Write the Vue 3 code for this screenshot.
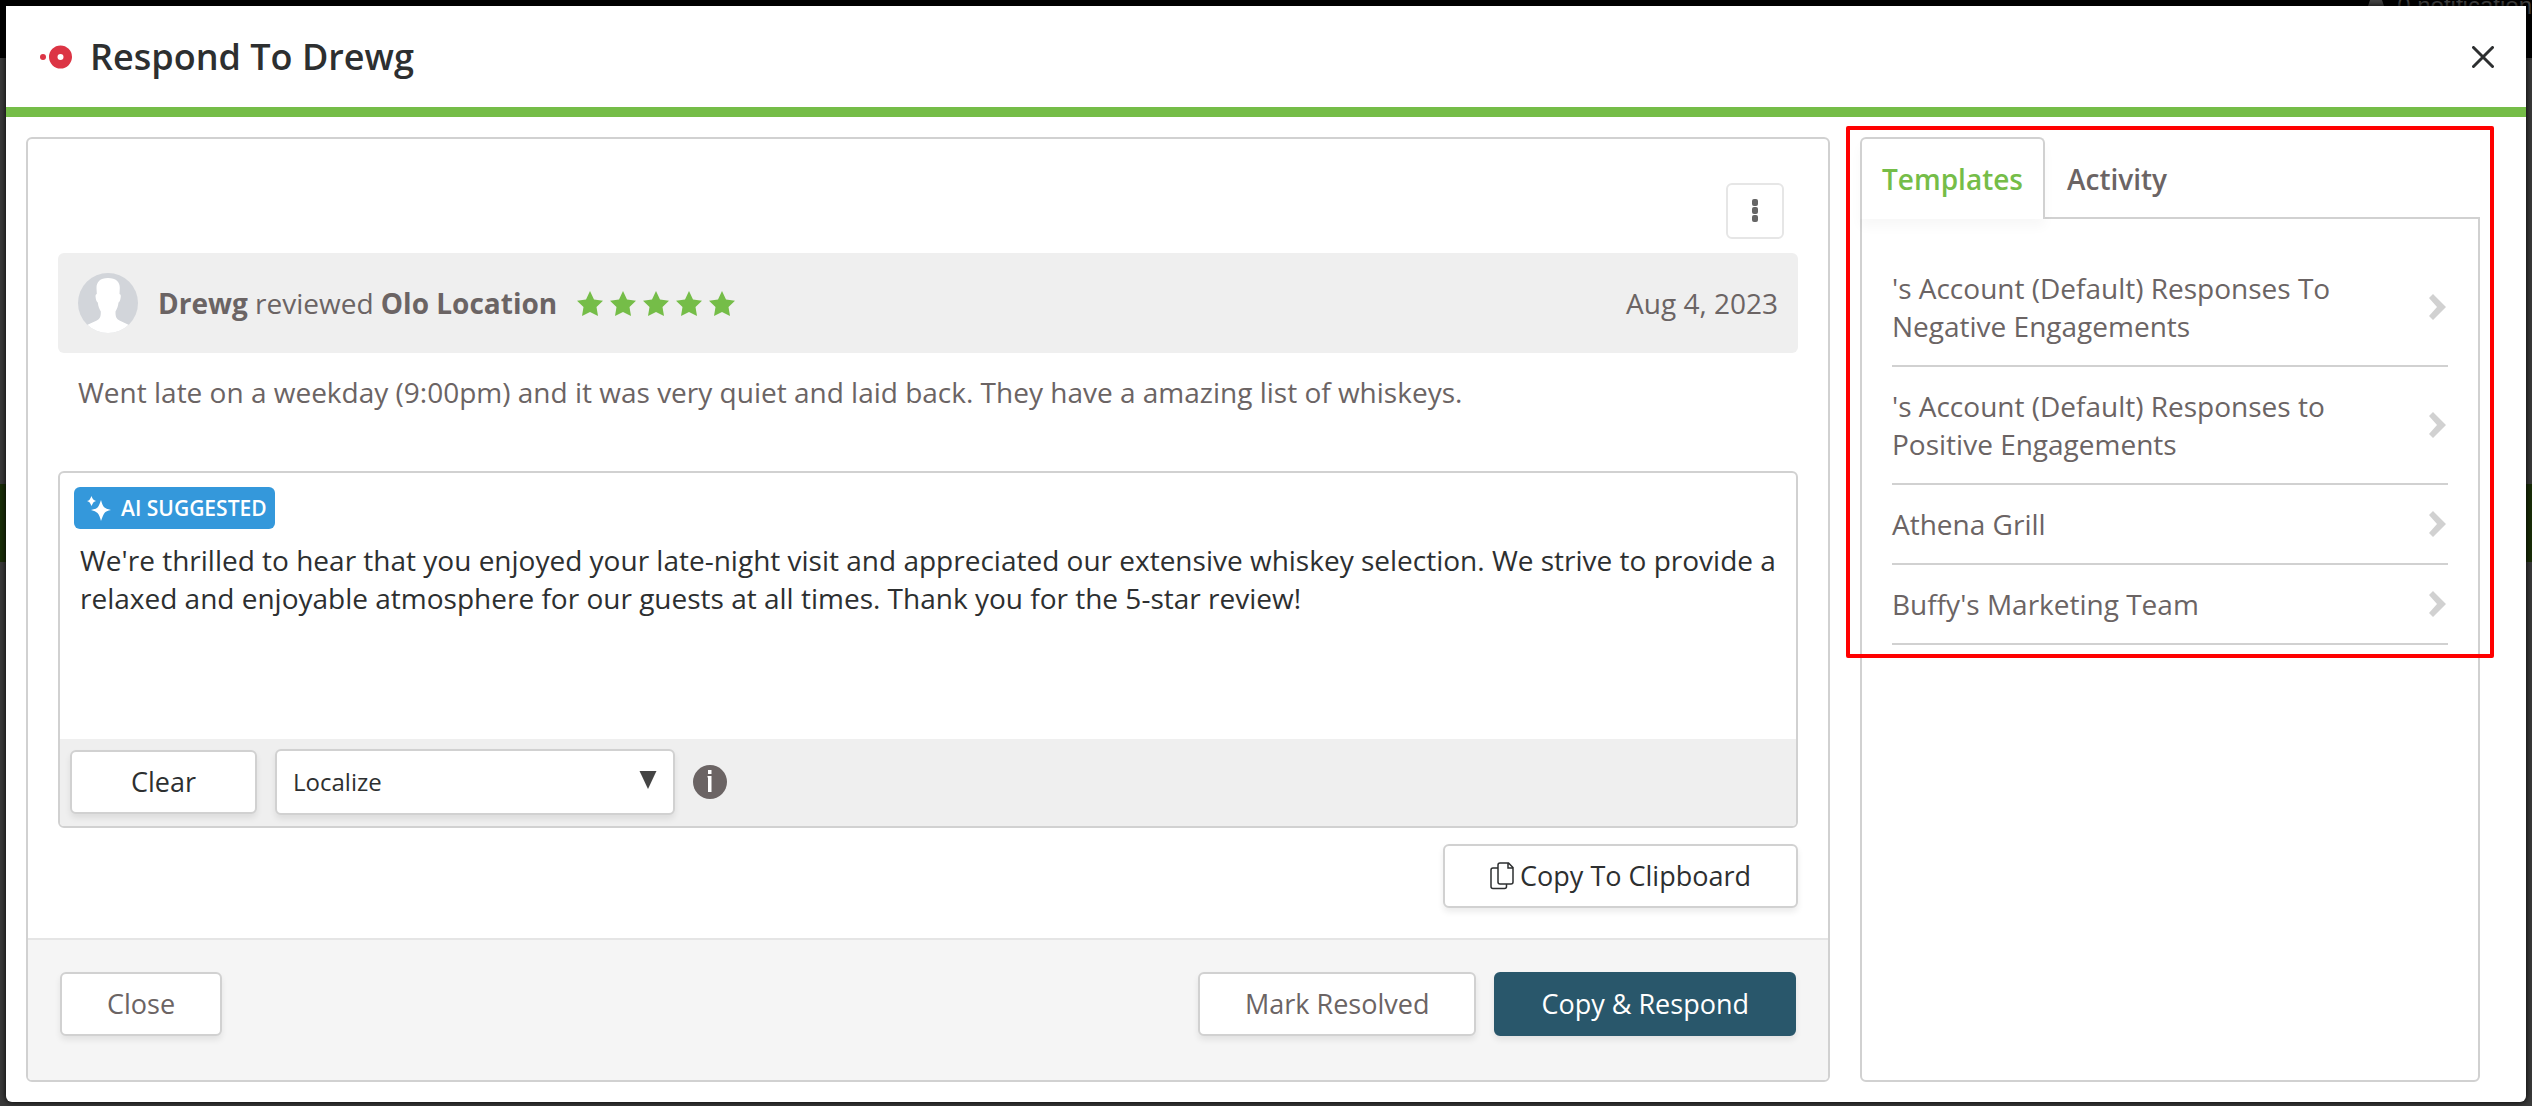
<template>
  <div class="page">
    <div class="backdrop" aria-hidden="true">
      <div class="backdrop-bar">
        <svg class="bell" viewBox="0 0 18 6"><path d="M3 0h12l2 6H1z" /></svg>
        <span>0 notification</span>
      </div>
      <div class="backdrop-row"></div>
    </div>

    <div class="modal" role="dialog" aria-labelledby="modal-title">
      <header class="modal-header">
        <svg class="logo" viewBox="0 0 32 30" aria-hidden="true">
          <circle cx="3" cy="15" r="3" />
          <path fill-rule="evenodd" d="M20.500 3.500a11.500 11.500 0 1 0 0 23a11.500 11.500 0 1 0 0-23zM20.500 12a3 3 0 1 1 0 6a3 3 0 1 1 0-6z" />
        </svg>
        <h1 id="modal-title">Respond To Drewg</h1>
        <button class="modal-close" type="button" aria-label="Close dialog">
          <svg viewBox="0 0 22 22"><path d="M1.500 1.500l19 19M20.500 1.500l-19 19" /></svg>
        </button>
      </header>

      <div class="modal-body">
        <section class="panel">
          <div class="panel-main">
            <div class="menu-row">
              <button class="kebab" type="button" aria-label="More actions">
                <svg viewBox="0 0 6 24">
                  <rect width="6" height="7" rx="2" />
                  <rect y="8" width="6" height="7" rx="2" />
                  <rect y="16" width="6" height="7" rx="2" />
                </svg>
              </button>
            </div>

            <div class="review-head">
              <svg class="avatar" viewBox="0 0 60 60" aria-hidden="true">
                <defs><clipPath id="avatar-clip"><circle cx="30" cy="30" r="30" /></clipPath></defs>
                <g clip-path="url(#avatar-clip)">
                  <rect width="60" height="60" fill="#d2d5da" />
                  <path fill="#fff" d="M30 5c-8 0-11.500 4-11.500 10l.3 6c-1.500.3-1.500 2-1 4.500.4 2 1 3.500 2 4 .4 4 1.500 6.500 3 9 0 5-.5 7-4 9L9 52v8h42v-8l-9.500-4.500c-3.500-2-4-4-4-9 1.500-2.500 2.600-5 3-9 1-.5 1.600-2 2-4 .5-2.500.5-4.200-1-4.500l.3-6C42 9 38 5 30 5z" />
                </g>
              </svg>
              <p class="review-who"><b>Drewg</b> reviewed <b>Olo Location</b></p>
              <div class="stars" role="img" aria-label="5 stars">
                <svg v-for="n in 5" :key="n" viewBox="0 0 26 25">
                  <path d="M13 0l4 8.600 9 1.200-6.500 6.300L21 25l-8-4-8 4 1.500-8.900L0 9.800l9-1.200z" />
                </svg>
              </div>
              <time datetime="2023-08-04">Aug 4, 2023</time>
            </div>
            <p class="review-text">{{ review }}</p>

            <div class="editor">
              <span class="badge">
                <svg viewBox="0 0 25 25" aria-hidden="true">
                  <path d="M15 4q1.500 6 3.500 7.500T25 14q-5 1-6.500 3T15 25q-1.500-6-3.500-8T5 14q5-1 6.500-2.500T15 4z" />
                  <path d="M5.500 0q1 3 1.800 3.500T10 5q-2 .5-2.700 1.500T5.500 10q-1-2.500-1.800-3.500T1 5q2-.5 2.700-1.500T5.500 0z" />
                </svg>
                AI SUGGESTED
              </span>
              <textarea v-model="reply" aria-label="Reply"></textarea>
              <div class="editor-bar">
                <button class="btn" type="button" @click="reply = ''">Clear</button>
                <div class="select-wrap">
                  <select v-model="localize" aria-label="Localize">
                    <option>Localize</option>
                  </select>
                  <svg viewBox="0 0 16 17" aria-hidden="true"><path d="M0 0h16L8 17z" /></svg>
                </div>
                <svg class="info" viewBox="0 0 34 34" role="img" aria-label="Info">
                  <circle cx="17" cy="17" r="17" fill="#6b6464" />
                  <path d="M15 5h3.500v4H15zM14.500 11h4v16H15V12.500h-.5z" fill="#fff" />
                </svg>
              </div>
            </div>

            <div class="copy-row">
              <button class="btn" type="button">
                <svg class="copy-icon" viewBox="0 0 24 28" aria-hidden="true">
                  <path d="M8 6H3a2 2 0 0 0-2 2v16.500a2 2 0 0 0 2 2h11.500a2 2 0 0 0 2-2V22" />
                  <path d="M10 1h8.500L23 5.500V20a2 2 0 0 1-2 2H10a2 2 0 0 1-2-2V3a2 2 0 0 1 2-2zM18 1v5h5" />
                </svg>
                Copy To Clipboard
              </button>
            </div>
          </div>

          <footer class="panel-footer">
            <button class="btn muted" type="button">Close</button>
            <div class="footer-right">
              <button class="btn muted" type="button">Mark Resolved</button>
              <button class="btn primary" type="button">Copy &amp; Respond</button>
            </div>
          </footer>
        </section>

        <aside class="side">
          <div class="tabs" role="tablist">
            <button
              v-for="t in tabs" :key="t" type="button" role="tab"
              class="tab" :class="{ active: t === activeTab }"
              :aria-selected="t === activeTab" @click="activeTab = t"
            >{{ t }}</button>
          </div>
          <ul class="template-list">
            <li v-for="item in templates" :key="item">
              <a href="#">
                <span>{{ item }}</span>
                <svg viewBox="0 0 20 26" aria-hidden="true"><path d="M5 0l13 13L5 26l-4-4 8-9-8-9z" /></svg>
              </a>
            </li>
          </ul>
          <div class="highlight"></div>
        </aside>
      </div>
    </div>
  </div>
</template>

<script setup>
import { ref } from 'vue'

const tabs = ['Templates', 'Activity']
const activeTab = ref('Templates')
const localize = ref('Localize')

const review = 'Went late on a weekday (9:00pm) and it was very quiet and laid back. They have a amazing list of whiskeys.'
const reply = ref("We're thrilled to hear that you enjoyed your late-night visit and appreciated our extensive whiskey selection. We strive to provide a relaxed and enjoyable atmosphere for our guests at all times. Thank you for the 5-star review!")

const templates = [
  "'s Account (Default) Responses To Negative Engagements",
  "'s Account (Default) Responses to Positive Engagements",
  'Athena Grill',
  "Buffy's Marketing Team",
]
</script>

<style>
body { background: #3a3a3a; }
</style>

<style scoped>
* { box-sizing: border-box; }
.page {
  position: relative; min-height: 100vh; padding: 6px 6px 4px; overflow: hidden;
  display: flex; color: #6b6464;
  font-family: "Open Sans", "Noto Sans", sans-serif; font-size: 28px; line-height: 38px;
}
button, select, textarea { font: inherit; color: inherit; }
h1, p, ul { margin: 0; padding: 0; }

.backdrop { position: absolute; inset: 0; background: #3a3a3a; }
.backdrop-bar {
  display: flex; justify-content: flex-end; gap: 12px; height: 58px;
  background: #000; color: #444; white-space: nowrap;
  font-family: "Liberation Sans", sans-serif; font-size: 24px; line-height: 12px;
}
.bell { width: 18px; height: 6px; fill: #444; }
.backdrop-row { height: 78px; margin-top: 426px; background: #1a2e08; }

.modal {
  position: relative; flex: 1; min-width: 0; display: flex; flex-direction: column;
  background: #fff; border-radius: 0 0 6px 6px; box-shadow: 0 0 6px #000;
}
.modal-header {
  display: flex; align-items: center; height: 111px; padding: 0 32px 0 34px;
  border-bottom: 10px solid #75bd48;
}
.logo { width: 32px; height: 30px; fill: #dc3545; }
.modal-header h1 { flex: 1; margin-left: 18px; font-size: 36px; font-weight: 600; color: #2d2f30; }
.modal-close { display: flex; padding: 0; border: 0; background: none; cursor: pointer; }
.modal-close svg { width: 22px; height: 22px; fill: none; stroke: #2d2f30; stroke-width: 3; stroke-linecap: round; }

.modal-body { flex: 1; display: flex; gap: 30px; padding: 20px 46px 20px 20px; }

.panel {
  flex: 1; min-width: 0; display: flex; flex-direction: column;
  border: 2px solid #d1d1d1; border-radius: 6px; overflow: hidden;
}
.panel-main { flex: 1; padding: 44px 30px 30px; }
.menu-row { display: flex; justify-content: flex-end; padding: 0 14px 14px; }
.kebab {
  display: flex; align-items: center; justify-content: center; width: 58px; height: 56px;
  border: 2px solid #e6e6e6; border-radius: 6px; background: #fff; padding: 0;
}
.kebab svg { width: 6px; height: 24px; fill: #666; }

.review-head {
  display: flex; align-items: center; gap: 20px; height: 100px; padding: 0 20px;
  background: #efefef; border-radius: 6px;
}
.avatar { width: 60px; height: 60px; }
.stars { flex: 1; display: flex; gap: 7px; }
.stars svg { width: 26px; height: 25px; fill: #75bd48; }
.review-text { padding: 20px 20px 60px; }

.editor { border: 2px solid #d1d1d1; border-radius: 6px; overflow: hidden; }
.badge {
  display: flex; align-items: center; gap: 10px; width: max-content; height: 42px;
  margin: 14px 14px 0; padding: 0 8px 0 12px; border-radius: 6px;
  background: #3498db; color: #fff; font-size: 21px; font-weight: 600;
}
.badge svg { width: 25px; height: 25px; fill: #fff; }
.editor textarea {
  display: block; width: 100%; height: 210px; padding: 12px 20px; border: 0;
  background: #fff; color: #2d2f30; resize: none; outline: none;
}
.editor-bar { display: flex; align-items: center; gap: 18px; padding: 10px 10px 11px; background: #efefef; }

.btn {
  display: inline-flex; align-items: center; justify-content: center; gap: 6px;
  height: 64px; padding: 0 45px; border: 2px solid #d1d1d1; border-radius: 6px;
  background: #fff; color: #2d2f30; font-size: 27px;
  box-shadow: 0 4px 6px rgba(0, 0, 0, 0.08); cursor: pointer;
}
.btn.muted { color: #6b6464; }
.btn.primary { background: #29576b; border-color: #29576b; color: #fff; }
.editor-bar .btn { padding: 0 59px; }
.select-wrap { position: relative; width: 400px; }
.select-wrap select {
  appearance: none; width: 100%; height: 66px; padding: 0 16px; display: block;
  border: 2px solid #d1d1d1; border-radius: 6px; background: #fff; color: #2d2f30;
  font-size: 24px; box-shadow: 0 4px 6px rgba(0, 0, 0, 0.08);
}
.select-wrap svg { position: absolute; right: 18px; top: 22px; width: 18px; height: 18px; fill: #444; pointer-events: none; }
.info { width: 34px; height: 34px; }

.copy-row { display: flex; justify-content: flex-end; padding-top: 16px; }
.copy-icon { width: 24px; height: 28px; fill: none; stroke: #2d2f30; stroke-width: 1.5; }

.panel-footer {
  display: flex; justify-content: space-between; align-items: flex-start;
  height: 142px; padding: 32px; background: #f5f5f5; border-top: 2px solid #e5e5e5;
}
.footer-right { display: flex; gap: 18px; }

.side { position: relative; flex: 0 0 620px; display: flex; flex-direction: column; }
.tabs { display: flex; height: 80px; }
.tab {
  height: 82px; padding: 0 20px; border: 2px solid transparent; border-bottom: 0;
  background: none; font-weight: 600; font-size: 28px; cursor: pointer;
}
.tab.active {
  position: relative; color: #75bd48; background: #fff; border-color: #d1d1d1;
  border-radius: 6px 6px 0 0; box-shadow: 0 8px 12px rgba(0, 0, 0, 0.03);
}
.template-list {
  flex: 1; list-style: none; padding: 30px; border: 2px solid #d1d1d1; border-radius: 0 0 6px 6px;
}
.template-list li { border-bottom: 2px solid #d1d1d1; }
.template-list a {
  display: flex; align-items: center; justify-content: space-between; padding: 20px 0;
  color: inherit; text-decoration: none;
}
.template-list span { flex: 0 1 460px; }
.template-list svg { width: 20px; height: 26px; fill: #d1d1d1; }
.highlight {
  position: absolute; inset: -11px -14px auto; height: 532px;
  border: 4px solid #f00; border-radius: 2px; pointer-events: none;
}
</style>
